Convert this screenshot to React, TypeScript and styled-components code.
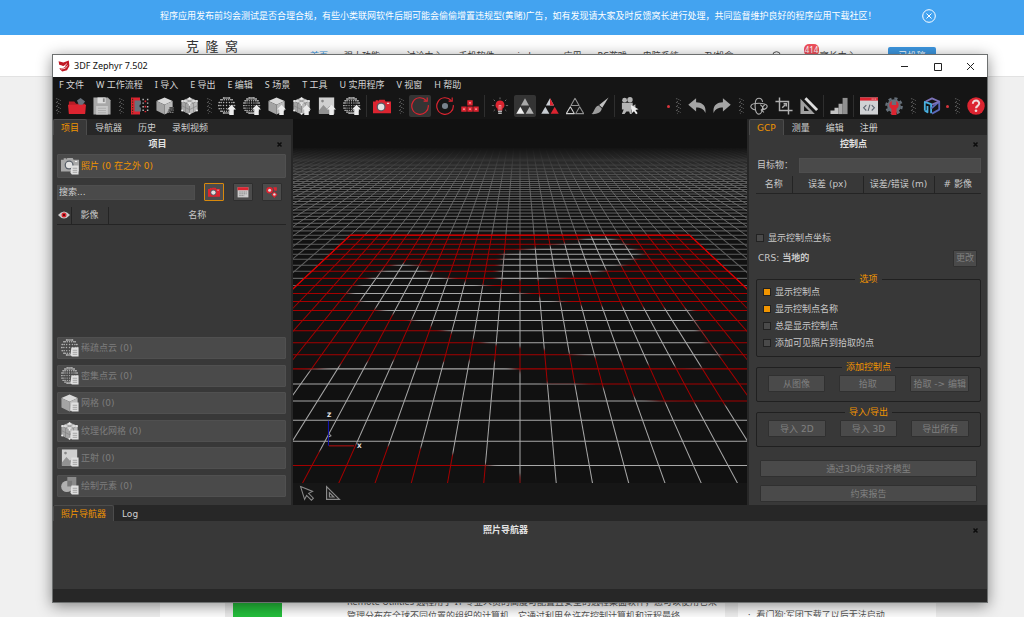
import React from "react";
import styled, { createGlobalStyle, css } from "styled-components";

const cjk = `"Noto Sans CJK SC", sans-serif`;
const uiFont = `"DejaVu Sans", ${cjk}`;
const webFont = `"Noto Sans", ${cjk}`;

const GlobalStyle = createGlobalStyle`
  * { box-sizing: border-box; }
  body { margin: 0; background: #f0f0f0; font-family: ${webFont}; font-size: 9px; line-height: 12px; overflow: hidden; }
  button, input { font: inherit; color: inherit; margin: 0; padding: 0; border: 0; }
  a { color: inherit; text-decoration: none; }
  h1, h2 { margin: 0; font-size: inherit; }
`;

/* ---------- web page behind the window ---------- */

const Page = styled.div`
  position: relative;
  min-height: 100vh;
  display: flex;
  flex-direction: column;
`;

const Notice = styled.div`
  height: 35px;
  flex: none;
  background: #43a3f0;
  color: #fff;
  padding: 0 88px 4px 160px;
  display: flex;
  align-items: center;
  justify-content: space-between;
  white-space: nowrap;
`;

const NoticeClose = styled.button`
  width: 14px;
  height: 14px;
  background: none;
  display: flex;
`;

const SiteHeader = styled.header`
  height: 42px;
  flex: none;
  background: #fff;
  border-bottom: 1px solid #e2e2e2;
  display: flex;
  align-items: center;
  padding: 0 88px 0 186px;
  color: #444;
  white-space: nowrap;
`;

const SiteLogo = styled.a`
  font-family: "Liberation Serif", ${cjk};
  font-size: 13px;
  align-self: flex-start;
  margin-top: 6px;
  color: #333;
`;

const SiteNav = styled.nav`
  display: flex;
  gap: 16px;
  margin-left: 72px;
  flex: 1;
`;

const SiteLink = styled.a<{ $current?: boolean }>`
  color: ${(p) => (p.$current ? "#3d97e0" : "#444")};
`;

const Account = styled.div`
  display: flex;
  align-items: center;
  gap: 22px;
`;

const AccountLink = styled.a`
  position: relative;
  padding-left: 16px;
`;

const CountBadge = styled.span`
  position: absolute;
  left: 0;
  top: -6px;
  padding: 0 1px;
  border-radius: 5px;
  background: #f0505c;
  color: #fff;
  font-size: 8px;
`;

const PostButton = styled.button`
  width: 48px;
  height: 18px;
  border-radius: 2px;
  background: #3d97e0;
  color: #fff;
`;

const Feed = styled.main`
  margin-top: auto;
  height: 24px;
  padding: 0 88px 0 160px;
  display: flex;
  gap: 13px;
  color: #555;
  white-space: nowrap;
`;

const Article = styled.article`
  flex: 1;
  overflow: hidden;
  background: #fff;
  padding-left: 65px;
  display: flex;
  gap: 65px;
`;

const Thumb = styled.div`
  width: 57px;
  flex: none;
  background: #25c03c;
  border-left: 8px solid #ececec;
`;

const Excerpt = styled.p`
  margin: 2px 0 0;
  line-height: 14px;
`;

const Comments = styled.aside`
  width: 198px;
  overflow: hidden;
  background: #fff;
  padding: 16px 0 0 10px;
  display: flex;
  gap: 6px;
`;

/* ---------- application window ---------- */

const Window = styled.section`
  position: absolute;
  top: 54px;
  left: 52px;
  right: 36px;
  bottom: 14px;
  border: 1px solid #6d7070;
  background: #272727;
  box-shadow: 0 3px 14px rgba(0, 0, 0, 0.45);
  display: flex;
  flex-direction: column;
  color: #c8c8c8;
  font-family: ${uiFont};
  white-space: nowrap;
`;

const TitleBar = styled.header`
  height: 22px;
  flex: none;
  background: #fff;
  color: #111;
  display: flex;
  align-items: center;
  padding-left: 5px;
  font-family: ${webFont};
`;

const AppTitle = styled.h1`
  flex: 1;
  margin-left: 4px;
  font-weight: 400;
`;

const CaptionButton = styled.button`
  width: 33px;
  height: 20px;
  background: none;
  display: flex;
  align-items: center;
  justify-content: center;
`;

const MenuBar = styled.nav`
  height: 16px;
  flex: none;
  background: #151515;
  display: flex;
  align-items: center;
  gap: 12px;
  padding: 0 0 1px 6px;
  font-family: ${webFont};
`;

const MenuItem = styled.button`
  background: none;
  color: #d6d6d6;
`;

const ToolBar = styled.div`
  height: 26px;
  flex: none;
  background: #151515;
  display: flex;
  align-items: center;
  gap: 3px;
`;

const Tool = styled.button<{ $active?: boolean }>`
  width: 22px;
  height: 22px;
  flex: none;
  border-radius: 2px;
  background: ${(p) => (p.$active ? "#343434" : "none")};
  display: flex;
  align-items: center;
  justify-content: center;
`;

const Separator = styled.span`
  width: 2px;
  height: 22px;
  flex: none;
  border-left: 1px solid #2e2e2e;
`;

const ToolGap = styled.span`
  width: 20px;
  flex: 0 1 20px;
`;

const OverflowDot = styled.span`
  width: 3px;
  height: 3px;
  flex: none;
  border-radius: 50%;
  background: #d8343c;
`;

const Workspace = styled.div`
  flex: 1;
  min-height: 0;
  display: grid;
  grid-template-columns: 238px 1fr 238px;
  gap: 2px;
`;

const Dock = styled.section`
  display: flex;
  flex-direction: column;
  min-height: 0;
  min-width: 0;
`;

const Tabs = styled.div`
  height: 16px;
  flex: none;
  display: flex;
`;

const Tab = styled.button<{ $selected?: boolean }>`
  padding: 0 7px;
  border: 1px solid transparent;
  border-bottom: 0;
  border-radius: 2px 2px 0 0;
  background: none;
  color: #d0d0d0;
  ${(p) =>
    p.$selected &&
    css`
      background: #383838;
      border-color: #4c4c4c;
      color: #f09400;
    `}
`;

const Panel = styled.div`
  flex: 1;
  min-height: 0;
  background: #383838;
  display: flex;
  flex-direction: column;
`;

const PanelTitle = styled.header`
  height: 19px;
  flex: none;
  padding: 0 8px 1px 0;
  display: flex;
  align-items: center;
  color: #e2e2e2;
`;

const PanelName = styled.h2`
  flex: 1;
  text-align: center;
  font-weight: 700;
  padding-right: 14px;
`;

const PanelClose = styled.button`
  width: 7px;
  height: 7px;
  background: none;
  color: #0c0c0c;
  display: flex;
`;

/* project panel */

const ProjectBody = styled.div`
  flex: 1;
  padding: 0 5px 8px 4px;
  display: flex;
  flex-direction: column;
`;

const Category = styled.button<{ $open?: boolean }>`
  width: 100%;
  height: ${(p) => (p.$open ? 24 : 22)}px;
  flex: none;
  padding: 0 3px;
  border: 1px solid #505050;
  border-radius: 1px;
  background: #4a4a4a;
  color: ${(p) => (p.$open ? "#f09400" : "#7d7d7d")};
  display: flex;
  align-items: center;
  gap: 2px;
`;

const CategoryStack = styled.div`
  height: 160px;
  flex: none;
  display: flex;
  flex-direction: column;
  justify-content: space-between;
`;

const SearchRow = styled.div`
  display: flex;
  align-items: center;
  height: 18px;
  margin-top: 5px;
  padding-right: 4px;
  gap: 9px;
`;

const Field = styled.input`
  flex: 1;
  min-width: 0;
  height: 15px;
  padding: 0 1px;
  background: #4a4a4a;
  color: #d0d0d0;
  border: 1px solid #4e4e4e;
  &::placeholder { color: #d0d0d0; opacity: 1; }
`;

const FilterButton = styled.button<{ $on?: boolean }>`
  width: 20px;
  height: 18px;
  border-radius: 1px;
  border: 1px solid ${(p) => (p.$on ? "#d8890c" : "#2e2e2e")};
  background: #4c4c4c;
  display: flex;
  align-items: center;
  justify-content: center;
`;

const Table = styled.table`
  width: 100%;
  table-layout: fixed;
  border-collapse: collapse;
  border-bottom: 1px solid #242424;
`;

const HeadCell = styled.th<{ $width?: number }>`
  ${(p) => p.$width && `width: ${p.$width}px;`}
  height: 17px;
  padding: 0;
  font-weight: 400;
  overflow: hidden;
  border-right: 1px solid #242424;
  &:last-child { border-right: 0; }
  svg { display: block; margin: 0 auto; }
`;

const ImageTableArea = styled.div`
  flex: 1;
  padding: 6px 0 0;
`;

/* 3D view */

const View = styled.section`
  display: flex;
  flex-direction: column;
  min-width: 0;
  min-height: 0;
  background: #161616;
`;

const Scene = styled.div`
  flex: 1;
  min-height: 0;
  background: #111;
  & > svg { display: block; width: 100%; height: 100%; }
`;

const ViewTools = styled.div`
  height: 22px;
  flex: none;
  padding: 0 0 3px 5px;
  display: flex;
  align-items: center;
  gap: 8px;
`;

const ViewTool = styled.button`
  width: 18px;
  height: 18px;
  background: none;
  display: flex;
  align-items: center;
  justify-content: center;
`;

/* control point panel */

const ControlBody = styled.div`
  flex: 1;
  padding: 0 6px 4px 7px;
  display: flex;
  flex-direction: column;
`;

const TargetRow = styled.label`
  height: 22px;
  display: flex;
  align-items: center;
  gap: 6px;
  padding-left: 1px;
`;

const PointTable = styled.div`
  height: 53px;
  flex: none;
`;

const Option = styled.label`
  display: flex;
  align-items: center;
  gap: 4px;
  height: 17px;
`;

const Check = styled.input`
  appearance: none;
  width: 8px;
  height: 8px;
  border: 1px solid #222;
  background: #4a4a4a;
  &:checked { background: #f09400; }
`;

const CrsRow = styled.div`
  display: flex;
  align-items: center;
  justify-content: space-between;
  height: 24px;
  margin-bottom: 5px;
  padding: 0 4px 0 2px;
`;

const FlatButton = styled.button<{ $wide?: boolean }>`
  height: 17px;
  padding: 0 2px;
  border: 1px solid #303030;
  border-radius: 1px;
  background: #4a4a4a;
  color: #808080;
  ${(p) => p.$wide && "width: 100%;"}
`;

const Group = styled.fieldset`
  margin: 0 0 6px;
  border: 1px solid #202020;
  border-radius: 2px;
  padding: 0 6px 5px;
  min-width: 0;
`;

const GroupTitle = styled.legend`
  margin: 0 auto;
  padding: 0 4px;
  line-height: 8px;
  color: #f09400;
`;

const ButtonRow = styled.div`
  display: grid;
  grid-template-columns: repeat(3, 1fr);
  gap: 14px;
  padding: 4px 5px;
`;

const Reports = styled.div`
  display: flex;
  flex-direction: column;
  gap: 8px;
  margin-top: 7px;
  padding: 0 4px;
`;

const BottomDock = styled.section`
  height: 84px;
  margin-bottom: 13px;
  flex: none;
  display: flex;
  flex-direction: column;
`;

/* ---------- drawings ---------- */

const Icon = ({ size = 20, children }: { size?: number; children: React.ReactNode }) => (
  <svg width={size} height={size} viewBox="0 0 20 20" fill="none" aria-hidden="true">
    {children}
  </svg>
);

const RED = "#dc2430";
const GRAY = "#b4b4b4";

const Grip = () => (
  <svg width="10" height="18" viewBox="0 0 10 18" aria-hidden="true">
    {[1, 5, 9, 13].map((y) => (
      <path key={y} d={`M3 ${y}h1.500v1H3zM5 ${y + 1}h1.500v1H5zM7 ${y + 2}h1v1H7zM4 ${y + 3}h1v1H4z`} fill="#585858" />
    ))}
  </svg>
);

const upArrow = <path d="M15 8.500l5 5.500h-2.500v6h-5v-6H10z" fill="#ececec" />;
const docMark = (
  <g>
    <path d="M11.500 9.500h8v10H12l-1.500-2z" fill="#e0e0e0" />
    <path d="M13 12.500h5M13 14.800h5M13 17h5" stroke="#8c8c8c" strokeWidth=".8" />
  </g>
);

/* A globe drawn as rows of dots, closer together towards the rim. */
const sphereArt = (dense: boolean) => {
  const steps = dense ? 5 : 4;
  const dots: [number, number][] = [];
  for (let i = -steps + 1; i < steps; i++) {
    const lat = (i / steps) * (Math.PI / 2);
    for (let j = -steps; j <= steps; j++) {
      const lon = (j / steps) * (Math.PI / 2);
      dots.push([9.5 + 9 * Math.cos(lat) * Math.sin(lon), 9.5 + 9 * Math.sin(lat)]);
    }
  }
  return (
    <g fill="#b0b0b0">
      {dots.map(([x, y], i) => (
        <circle key={i} cx={x} cy={y} r={dense ? 0.75 : 0.8} />
      ))}
    </g>
  );
};

const cubeArt = (wire?: boolean) => (
  <g>
    <path d="M9.500 .5L18.500 4.500 9.500 8.500 .5 4.500z" fill="#dadada" />
    <path d="M.5 4.500L9.500 8.500v11L.5 15z" fill="#a4a4a4" />
    <path d="M18.500 4.500L9.500 8.500v11l9-4.500z" fill="#bababa" />
    {wire && (
      <g>
        <path d="M.5 9.500l9 4.500 9-4.500M5 6.500v11M14 6.500v11M5 2.500l9 4M14 2.500l-9 4" stroke="#808080" strokeWidth=".7" />
        <g fill="#f0f0f0">
          {[[1.3, 4.5], [9.5, 1.3], [17.7, 4.5], [9.5, 8.5], [1.3, 15], [17.7, 15], [9.5, 18.7]].map(([x, y]) => (
            <circle key={`${x}-${y}`} cx={x} cy={y} r="1.1" />
          ))}
        </g>
      </g>
    )}
  </g>
);

const pictureArt = (
  <g>
    <path d="M1 0.500h17v18H1z" fill="#d0d0d0" />
    <path d="M1 15l5-6 4 4 3-3 5 4v4.500H1z" fill="#929292" />
    <circle cx="5" cy="4.500" r="1.500" fill="#888" />
  </g>
);

const cameraArt = (body: string) => (
  <g>
    <path d="M0 5h3V3.500h3V5l1-2h6l1 2h6v13H0z" fill={body} />
    <circle cx="9" cy="11" r="5" fill="#555c66" />
    <circle cx="9" cy="11" r="3.600" fill="#e2e2e2" />
    <path d="M15.500 7h2.500" stroke="#eee" strokeWidth="1.200" />
  </g>
);

const triangles = (a: string, b: string, c: string, outline?: boolean) => (
  <g strokeLinejoin="round">
    {[
      ["M10 1.500l4.500 8h-9z", a],
      ["M4.800 10.800l4.500 7.700H.300z", b],
      ["M15.200 10.800l4.500 7.700h-9z", c],
    ].map(([d, color]) => (
      <path key={d} d={d} fill={outline ? "none" : color} stroke={outline ? color : "none"} strokeWidth="1.200" />
    ))}
  </g>
);

const art: Record<string, React.ReactNode> = {
  open: (
    <g>
      <path d="M1 5h6l2 2.500h10V18H1z" fill="#b81c26" />
      <path d="M10 4l4-3 5 4-3 4h-4z" fill="#68717c" />
      <path d="M0 8.500h20L19 19H1z" fill="#dc2430" />
    </g>
  ),
  save: (
    <g>
      <path d="M.5 .5h16l3 3v16H.5z" fill="#a8a8a8" />
      <path d="M5 .5h9v6.500H5z" fill="#dcdcdc" />
      <path d="M11 1.500h2v4h-2z" fill="#888" />
      <path d="M3.500 10h13v9.500h-13z" fill="#c8c8c8" />
      <path d="M5.500 12.500h9M5.500 15h9M5.500 17.500h9" stroke="#aaa" />
    </g>
  ),
  align: (
    <g>
      <path d="M0 .5h10v4L7 6v8l3 1v4.500H0z" fill={RED} />
      <path d="M4 4h7v4L9.500 9v2l1.500 1v4H4z" fill="#68717c" />
      <path d="M1.800 2v16" stroke="#331" strokeWidth="1.200" strokeDasharray="1.500 1.500" />
      <path d="M13.500 2v16M18.500 2v16" stroke="#bbb" strokeWidth="1.600" strokeDasharray="1.600 2.400" />
      <path d="M16 4v13" stroke={RED} strokeWidth="1.800" strokeDasharray="1.800 4" />
    </g>
  ),
  densify: (
    <g>
      {cubeArt()}
      <path d="M15 12h5M14 14.500h6M13 17h7" stroke="#151515" strokeWidth="2" />
      <path d="M15 12h5M14 14.500h6M13 17h7" stroke="#999" strokeWidth="1.300" strokeDasharray="1.200 1" />
    </g>
  ),
  mesh: cubeArt(true),
  sparseUp: <g>{sphereArt(false)}{upArrow}</g>,
  denseUp: <g>{sphereArt(true)}{upArrow}</g>,
  cubeUp: <g>{cubeArt()}{upArrow}</g>,
  meshUp: <g>{cubeArt(true)}{upArrow}</g>,
  pictureUp: <g>{pictureArt}{upArrow}</g>,
  camera: cameraArt(RED),
  orbit: (
    <g stroke={RED} strokeWidth="1.300">
      <path d="M17 4A9.200 9.200 0 1 0 19.200 9" />
      <path d="M14 4.500h4V.5" />
    </g>
  ),
  pivot: (
    <g stroke={RED} strokeWidth="1.300">
      <path d="M17 4A9.200 9.200 0 1 0 19.200 9" />
      <path d="M14 4.500h4V.5" />
      <circle cx="10" cy="10" r="3.400" fill="#78828c" stroke="none" />
    </g>
  ),
  keys: (
    <g>
      <path d="M7 3.500h6v6H7zM.300 10.500h6v6h-6zM7 10.500h6v6H7zM13.700 10.500h6v6h-6z" fill={RED} />
      <path d="M9 6.500h2M2.300 13.500h2M9 13.500h2M15.700 13.500h2" stroke="#ffb0b0" strokeWidth="1.400" />
    </g>
  ),
  bulb: (
    <g>
      <path d="M10 4a4.900 4.900 0 0 0-2.700 9V15h5.400v-2A4.900 4.900 0 0 0 10 4z" fill={RED} />
      <path d="M7.800 15.800h4.400M8 18h4" stroke="#b4b4b4" strokeWidth="1.600" />
      <path d="M9 14V9l1 1 1-1v5" stroke="#f0b0b0" strokeWidth=".8" />
      <path d="M10 .500v2M3 3l1.500 1.500M17 3l-1.500 1.500M1 9.500h2.500M16.500 9.500H19M3 15.500L4.500 14M17 15.500L15.500 14" stroke="#777" />
    </g>
  ),
  solid: triangles("#a8a8a8", "#f0f0f0", "#b4b4b4"),
  textured: (
    <g>
      {triangles("#c8ccd2", "#c8ccd2", RED)}
      <path d="M10 1.500l4.500 8H10z" fill={RED} />
    </g>
  ),
  wire: triangles("#909090", "#d0d0d0", "#909090", true),
  brush: (
    <g>
      <path d="M19.500 .5L12.500 12 9 9z" fill="#c0c0c0" />
      <path d="M8.500 9.500l3.500 3.300C11.500 17.500 6 19.500 .5 19 4 17 3.500 10.500 8.500 9.500z" fill="#9c9c9c" />
    </g>
  ),
  movie: (
    <g fill={GRAY}>
      <circle cx="4" cy="3.500" r="2.700" />
      <circle cx="10" cy="3" r="3" />
      <path d="M1 6.500h12V14H1zM13 10l3-2v6l-3-1zM3 14h8l1 5h-2l-1-3H6l-2 3H1z" />
      <path d="M11 9l8.500 4.500-3.500 1 2.500 3.500-1.800 1.200-2.300-3.500-2.400 2.300z" fill="#ececec" />
    </g>
  ),
  undo: <path d="M.3 8.500L9 1.500v4.200c7 0 11.500 4 10.300 12-2-4.500-5-6-10.300-6V16z" fill="#a4a4a4" />,
  redo: <path d="M19.700 8.500L11 1.500v4.200C4 5.700 -.5 9.700 .7 17.700c2-4.500 5-6 10.300-6V16z" fill="#a4a4a4" />,
  rotate: (
    <g stroke="#b0b0b0" strokeWidth="1.200">
      <path d="M6 14.500C2 13.500 .500 11.500 1 10 2 6 18 6 19 10c.500 2-2 4-6 4.500" />
      <path d="M14 5.500C13 0 7 0 6 5.500c-1 6 0 13.500 4 13.500 2.500 0 4-4 4-8" />
      <path d="M15.500 12l-3 2.500 3 2.500M11.500 8.500L14 11l2.500-2.500" />
    </g>
  ),
  crop: (
    <g stroke="#b0b0b0" strokeWidth="1.600">
      <path d="M5 .500V15h14.500M.500 5H15v14.500" />
      <path d="M8 12l3.500-3.500" />
      <path d="M9.500 7.500h3v3" />
    </g>
  ),
  measure: (
    <g>
      <path d="M.5 2l16 17H.5zM4.500 10v5.500H10z" fill="#a0a0a0" fillRule="evenodd" />
      <path d="M6 1.500L19 14.500" stroke="#ddd" strokeWidth="3.200" />
    </g>
  ),
  steps: (
    <g>
      <path d="M14 1h5.500v18H14z" fill="#909090" />
      <path d="M9.500 7.500H14V19H9.500z" fill="#a8a8a8" />
      <path d="M5 12h4.500v7H5zM.500 15H5v4H.500z" fill="#c4c4c4" />
    </g>
  ),
  code: (
    <g>
      <path d="M0 .5h20v19H0z" fill="#d0d2d4" />
      <path d="M0 .5h20V4H0z" fill={RED} />
      <path d="M13 2.300h5" stroke="#fff" strokeDasharray="1 1" />
      <path d="M7 9l-3 3 3 3M13 9l3 3-3 3M11 8.500l-2 7" stroke="#5d6670" strokeWidth="1.200" />
    </g>
  ),
  gear: (
    <g>
      <circle cx="10" cy="10" r="7.600" fill="#66707a" />
      <circle cx="10" cy="10" r="8.500" stroke="#66707a" strokeWidth="2.600" strokeDasharray="3.500 3.200" />
      <path d="M7.500 4.500v4.500h5V4.500c3.500 2 3.500 7 .3 8.500V20H7.200v-7C4 11.500 4 6.500 7.500 4.500z" fill={RED} />
    </g>
  ),
  cloud: (
    <g strokeLinejoin="round" strokeWidth="2">
      <path d="M2 15V5.500l7 2.500v10M2 15l3 2V10" stroke="#48b0e0" />
      <path d="M9 13l9-8v9l-8 4.500" stroke="#5a68b8" />
      <path d="M3 5l7-3.500L18 5l-8 3.500" stroke="#7c72b8" />
    </g>
  ),
  help: (
    <g>
      <circle cx="10" cy="10" r="9.700" fill={RED} />
      <path d="M6.500 7.500c0-5 7.500-4.500 7 0-.200 2.200-3.500 2.500-3.500 5" stroke="#f0dada" strokeWidth="2.300" />
      <circle cx="10" cy="15.300" r="1.500" fill="#f0dada" />
    </g>
  ),
  photos: <g><g transform="translate(0 -2)">{cameraArt("#a8a8a8")}</g>{docMark}</g>,
  sparse: <g>{sphereArt(false)}{docMark}</g>,
  dense: <g>{sphereArt(true)}{docMark}</g>,
  meshes: <g>{cubeArt()}{docMark}</g>,
  texMeshes: <g>{cubeArt(true)}{docMark}</g>,
  ortho: <g>{pictureArt}{docMark}</g>,
  shapes: (
    <g>
      <path d="M7 0h10v10H7z" fill="#8c8c8c" />
      <circle cx="6.500" cy="10.500" r="6.300" fill="#b0b0b0" />
      <path d="M7 4.300h5.300v6.200H7z" fill="#787878" />
      {docMark}
    </g>
  ),
};

const litAreas = (
  <g filter="url(#soften)">
    <path d="M295 116L314 116L328 123L349 134L330 145L300 154L248 160L203 160L210 134L243 128L284 122z" />
    <path d="M108 143L90 151L56 172L69 182L84 189L119 200L157 212L197 224L215 226L251 229L275 233L300 237L325 240L350 244L407 248L426 235L411 222L405 211L397 189L287 186L264 181L227 173L184 164L147 157L128 147z" />
    <path d="M-9 252L17 250L47 245L70 242L100 240L150 242L177 240L200 240L227 251L254 263L280 263L310 267L342 277L370 282L400 283L430 285L470 283L470 375L240 375L227 354L192 343L160 333L127 327L97 325L63 323L30 330L-9 332z" />
  </g>
);

const ViewportScene = () => {
  const horizon = -42;
  const centre = 227;
  const slope = 0.0892;
  const rowY = (n: number) => horizon + 1 / (0.00259 + 0.000171 * n);
  const crisp = (y: number) => Math.floor(y) + 0.5;
  const colX = (k: number, y: number) => centre + k * slope * (y - horizon);
  const top = rowY(22);
  const nearRows = Array.from({ length: 23 }, (_, n) => crisp(rowY(n)));
  const farRows = Array.from({ length: 56 }, (_, n) => rowY(n + 23));
  const nearCols = Array.from({ length: 25 }, (_, i) => i - 12);
  const farCols = Array.from({ length: 81 }, (_, i) => i - 40);
  const floor = (
    <g>
      {nearRows.map((y) => (
        <path key={y} d={`M${colX(-12, y)} ${y}H${colX(12, y)}`} />
      ))}
      {nearCols.map((k) => (
        <path key={k} d={`M${colX(k, top)} ${top}L${colX(k, 364)} 364`} />
      ))}
    </g>
  );
  return (
    <svg viewBox="0 0 454 362" preserveAspectRatio="xMidYMid slice" fill="none">
      <defs>
        <linearGradient id="fog" x1="0" y1="28" x2="0" y2="118" gradientUnits="userSpaceOnUse">
          <stop offset="0" stopColor="#fff" stopOpacity="0" />
          <stop offset="0.14" stopColor="#fff" stopOpacity="0.4" />
          <stop offset="0.4" stopColor="#fff" stopOpacity="0.9" />
          <stop offset="1" stopColor="#fff" stopOpacity="1" />
        </linearGradient>
        <mask id="fogMask" maskUnits="userSpaceOnUse" x="0" y="0" width="454" height="118">
          <path d="M0 28H454V118H0z" fill="url(#fog)" />
        </mask>
        <filter id="soften" x="-5%" y="-5%" width="110%" height="110%">
          <feGaussianBlur stdDeviation="3 1" />
        </filter>
        <mask id="litMask" maskUnits="userSpaceOnUse" x="0" y="0" width="454" height="364">
          <g fill="#fff">{litAreas}</g>
        </mask>
        <mask id="unlitMask" maskUnits="userSpaceOnUse" x="0" y="0" width="454" height="364">
          <path d="M0 0H454V364H0z" fill="#fff" />
          <g fill="#000">{litAreas}</g>
        </mask>
      </defs>
      <g mask="url(#fogMask)" stroke="#727272" strokeWidth="0.9">
        {farRows.map((y) => (
          <path key={y} d={`M0 ${y}H454`} />
        ))}
        {farCols.map((k) => (
          <path key={k} d={`M${colX(k, 28)} 28L${colX(k, top)} ${top}`} />
        ))}
      </g>
      <g stroke="#5e5e5e">
        {nearRows.slice(10).map((y) => (
          <path key={y} d={`M0 ${y}H${colX(-12, y)}M${colX(12, y)} ${y}H454`} />
        ))}
        {[-16, -15, -14, -13, 13, 14, 15, 16].map((k) => (
          <path key={k} d={`M${colX(k, top)} ${top}L${colX(k, 190)} 190`} />
        ))}
      </g>
      <g mask="url(#unlitMask)" stroke="#a40000">{floor}</g>
      <g mask="url(#litMask)" stroke="#a8a8a8">{floor}</g>
      <path
        d={`M${colX(-12, 190)} 190L${colX(-12, 115.5)} 115.500H${colX(12, 115.5)}L${colX(12, 190)} 190`}
        stroke="#dc0000"
        strokeWidth="1.200"
      />
      <path d="M36.500 300v25" stroke="#1414b4" />
      <path d="M37 325h25" stroke="#8c1010" strokeWidth="1.400" />
      <path d="M37 313l2 2-2 1" stroke="#999" />
      <g fill="#e6e6e6" fontFamily="DejaVu Sans, sans-serif" fontSize="6" fontWeight="700">
        <text x="35" y="296">Z</text>
        <text x="65" y="327">X</text>
      </g>
    </svg>
  );
};

const CloseGlyph = () => (
  <svg width="7" height="7" viewBox="0 0 7 7" aria-hidden="true">
    <path d="M1.500 1.500l4 4M5.500 1.500l-4 4" stroke="currentColor" strokeWidth="1.500" />
  </svg>
);

/* ---------- data ---------- */

const menus = ["F 文件", "W 工作流程", "I 导入", "E 导出", "E 编辑", "S 场景", "T 工具", "U 实用程序", "V 视窗", "H 帮助"];

const tools =
  "grip open save grip align densify mesh grip sparseUp denseUp cubeUp meshUp pictureUp denseUp sep camera grip orbit* pivot keys sep bulb solid* textured wire brush sep movie gap dot grip undo redo grip rotate crop measure sep steps sep code gear grip cloud dot grip help".split(" ");

const categories: [string, string][] = [
  ["sparse", "稀疏点云 (0)"],
  ["dense", "密集点云 (0)"],
  ["meshes", "网格 (0)"],
  ["texMeshes", "纹理化网格 (0)"],
  ["ortho", "正射 (0)"],
  ["shapes", "绘制元素 (0)"],
];

const siteLinks = ["首页", "强大功能 ⌄", "讨论中心", "手机软件", "windows", "应用", "PC游戏", "电脑系统 ⌄", "TV机盒"];

const options: [string, boolean][] = [
  ["显示控制点", true],
  ["显示控制点名称", true],
  ["总是显示控制点", false],
  ["添加可见照片到拾取的点", false],
];

const ToolItem = ({ name }: { name: string }) => {
  if (name === "grip") return <Grip />;
  if (name === "sep") return <Separator />;
  if (name === "gap") return <ToolGap />;
  if (name === "dot") return <OverflowDot />;
  const key = name.replace("*", "");
  return (
    <Tool $active={name.endsWith("*")} aria-label={key}>
      <Icon size={18}>{art[key]}</Icon>
    </Tool>
  );
};

const DockTabs = ({ names }: { names: string[] }) => (
  <Tabs role="tablist">
    {names.map((name, i) => (
      <Tab key={name} role="tab" aria-selected={i === 0} $selected={i === 0}>
        {name}
      </Tab>
    ))}
  </Tabs>
);

const Title = ({ children }: { children: React.ReactNode }) => (
  <PanelTitle>
    <PanelName>{children}</PanelName>
    <PanelClose aria-label="关闭"><CloseGlyph /></PanelClose>
  </PanelTitle>
);

const ActionGroup = ({ title, actions }: { title: string; actions: string[] }) => (
  <Group>
    <GroupTitle>{title}</GroupTitle>
    <ButtonRow>
      {actions.map((a) => (
        <FlatButton key={a}>{a}</FlatButton>
      ))}
    </ButtonRow>
  </Group>
);

export default function App() {
  return (
    <Page>
      <GlobalStyle />
      <Notice>
        <span>
          程序应用发布前均会测试是否合理合规，有些小类联网软件后期可能会偷偷增置违规型(黄赌)广告，如有发现请大家及时反馈窝长进行处理，共同监督维护良好的程序应用下载社区！
        </span>
        <NoticeClose aria-label="关闭">
          <svg width="14" height="14" viewBox="0 0 14 14" fill="none" stroke="#fff">
            <circle cx="7" cy="7" r="6.300" />
            <path d="M4.500 4.500l5 5M9.500 4.500l-5 5" />
          </svg>
        </NoticeClose>
      </Notice>
      <SiteHeader>
        <SiteLogo href="#">克&nbsp; 隆&nbsp; 窝</SiteLogo>
        <SiteNav>
          {siteLinks.map((l, i) => (
            <SiteLink key={l} href="#" $current={i === 0}>{l}</SiteLink>
          ))}
        </SiteNav>
        <Account>
          <svg width="10" height="10" viewBox="0 0 10 10" fill="none" stroke="#555">
            <circle cx="4.500" cy="4.500" r="3.800" />
            <path d="M7.500 7.500l2 2" />
          </svg>
          <AccountLink href="#">
            窝长中心 ⌄<CountBadge>414</CountBadge>
          </AccountLink>
          <PostButton>已投稿</PostButton>
        </Account>
      </SiteHeader>
      <Feed>
        <Article>
          <Thumb />
          <Excerpt>
            Remote Utilities 远程用于 IT 专业人员的高度可配置且安全的远程桌面软件，您可以使用它来
            <br />
            管理分布在全球不同位置的组织的计算机，它通过利用允许在控制计算机和远程最终
          </Excerpt>
        </Article>
        <Comments>
          <span>·</span>
          <span>看门狗:军团下载了以后无法启动</span>
        </Comments>
      </Feed>

      <Window>
        <TitleBar>
          <Icon size={12}>
            <path d="M1 2l8 2 9-3 1 9-4 7-8 2-5-5 8-1 4-4-6 1-6-2z" fill="#c01824" />
            <path d="M2 9l7 2 6-5M5 15l7-1 4-5" stroke="#fff" strokeWidth="1.200" />
          </Icon>
          <AppTitle>3DF Zephyr 7.502</AppTitle>
          <CaptionButton aria-label="最小化">
            <svg width="9" height="9" stroke="#222"><path d="M1 4.500h7" /></svg>
          </CaptionButton>
          <CaptionButton aria-label="最大化">
            <svg width="9" height="9" fill="none" stroke="#222"><path d="M1.500 1.500h7v7h-7z" /></svg>
          </CaptionButton>
          <CaptionButton aria-label="关闭">
            <svg width="9" height="9" stroke="#222"><path d="M1 1l7 7M8 1L1 8" /></svg>
          </CaptionButton>
        </TitleBar>
        <MenuBar>
          {menus.map((m) => (
            <MenuItem key={m}>{m}</MenuItem>
          ))}
        </MenuBar>
        <ToolBar role="toolbar">
          {tools.map((t, i) => (
            <ToolItem key={i} name={t} />
          ))}
        </ToolBar>

        <Workspace>
          <Dock>
            <DockTabs names={["项目", "导航器", "历史", "录制视频"]} />
            <Panel>
              <Title>项目</Title>
              <ProjectBody>
                <Category $open>
                  <Icon size={18}>{art.photos}</Icon>照片 (0 在之外 0)
                </Category>
                <SearchRow>
                  <Field type="text" placeholder="搜索..." aria-label="搜索" />
                  <FilterButton $on aria-label="照片">
                    <Icon size={12}>{cameraArt(RED)}</Icon>
                  </FilterButton>
                  <FilterButton aria-label="日期">
                    <Icon size={12}>
                      <path d="M1 2h18v17H1z" fill="#ccc" />
                      <path d="M1 2h18v5H1z" fill={RED} />
                      <path d="M4 10h12M4 13h12M4 16h8" stroke="#777" strokeWidth="1.600" strokeDasharray="2 1.500" />
                    </Icon>
                  </FilterButton>
                  <FilterButton aria-label="标记">
                    <Icon size={12}>
                      <circle cx="6" cy="7" r="5.500" fill={RED} />
                      <circle cx="6" cy="7" r="2.500" fill="#ddd" />
                      <path d="M12 2h6v6h-4z" fill={RED} />
                      <path d="M14 9l5 5-5 6-5-6z" fill={RED} />
                      <circle cx="14" cy="14" r="2" fill="#ddd" />
                    </Icon>
                  </FilterButton>
                </SearchRow>
                <ImageTableArea>
                  <Table>
                    <thead>
                      <tr>
                        <HeadCell $width={14}>
                          <svg width="12" height="8" viewBox="0 0 12 8" aria-label="可见">
                            <path d="M0 4q6-7 12 0q-6 7-12 0z" fill="#ccc" />
                            <circle cx="6" cy="4" r="2.500" fill={RED} />
                            <circle cx="6" cy="4" r="1" fill="#400" />
                          </svg>
                        </HeadCell>
                        <HeadCell $width={37}>影像</HeadCell>
                        <HeadCell>名称</HeadCell>
                      </tr>
                    </thead>
                  </Table>
                </ImageTableArea>
                <CategoryStack>
                  {categories.map(([icon, label]) => (
                    <Category key={icon}>
                      <Icon size={18}>{art[icon]}</Icon>{label}
                    </Category>
                  ))}
                </CategoryStack>
              </ProjectBody>
            </Panel>
          </Dock>

          <View>
            <Scene><ViewportScene /></Scene>
            <ViewTools>
              <ViewTool aria-label="选择">
                <Icon size={16}>
                  <path d="M2 2l15 6-5 2.500 6 6-2.500 2.500-6-6L7 18z" stroke="#8a8a8a" strokeWidth="1.300" />
                </Icon>
              </ViewTool>
              <ViewTool aria-label="测量">
                <Icon size={16}>
                  <path d="M2 2l16 16H2zM5.500 9.500V15H11z" stroke="#8a8a8a" strokeWidth="1.500" />
                </Icon>
              </ViewTool>
            </ViewTools>
          </View>

          <Dock>
            <DockTabs names={["GCP", "测量", "编辑", "注册"]} />
            <Panel>
              <Title>控制点</Title>
              <ControlBody>
                <TargetRow>
                  目标物：
                  <Field type="text" />
                </TargetRow>
                <PointTable>
                  <Table>
                    <thead>
                      <tr>
                        <HeadCell $width={36}>名称</HeadCell>
                        <HeadCell>误差 (px)</HeadCell>
                        <HeadCell>误差/错误 (m)</HeadCell>
                        <HeadCell $width={47}># 影像</HeadCell>
                      </tr>
                    </thead>
                  </Table>
                </PointTable>
                <Option>
                  <Check type="checkbox" />显示控制点坐标
                </Option>
                <CrsRow>
                  <span>CRS: <b>当地的</b></span>
                  <FlatButton>更改</FlatButton>
                </CrsRow>
                <Group>
                  <GroupTitle>选项</GroupTitle>
                  {options.map(([label, on]) => (
                    <Option key={label}>
                      <Check type="checkbox" defaultChecked={on} />{label}
                    </Option>
                  ))}
                </Group>
                <ActionGroup title="添加控制点" actions={["从图像", "拾取", "拾取 -> 编辑"]} />
                <ActionGroup title="导入/导出" actions={["导入 2D", "导入 3D", "导出所有"]} />
                <Reports>
                  <FlatButton $wide>通过3D约束对齐模型</FlatButton>
                  <FlatButton $wide>约束报告</FlatButton>
                </Reports>
              </ControlBody>
            </Panel>
          </Dock>
        </Workspace>

        <BottomDock>
          <DockTabs names={["照片导航器", "Log"]} />
          <Panel>
            <Title>照片导航器</Title>
          </Panel>
        </BottomDock>
      </Window>
    </Page>
  );
}
